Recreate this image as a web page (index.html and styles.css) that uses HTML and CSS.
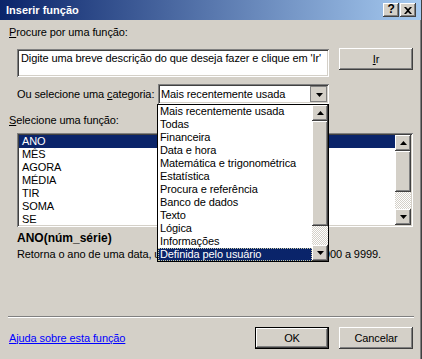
FILE: index.html
```html
<!DOCTYPE html>
<html lang="pt">
<head>
  <meta charset="UTF-8">
  <title>Inserir função</title>
  <link rel="stylesheet" href="styles.css">
</head>
<body>
<div class="window">
  <div class="titlebar">
    <span class="title">Inserir função</span>
    <div class="caption-buttons">
      <span class="cap-btn help">?</span>
      <span class="cap-btn close">
        <svg width="8" height="7" viewBox="0 0 8 7"><path d="M0 0h2l2 2 2-2h2L5 3.5 8 7H6L4 5 2 7H0l3-3.5z" fill="#000"/></svg>
      </span>
    </div>
  </div>

  <div class="content">
    <div class="label"><u>P</u>rocure por uma função:</div>
    <div class="search-row">
      <div class="search-box">Digite uma breve descrição do que deseja fazer e clique em 'Ir'</div>
      <span class="btn"><u>I</u>r</span>
    </div>

    <div class="category-row">
      <span class="label cat-label">Ou selecione uma <u>c</u>ategoria:</span>
      <div class="combo">
        <span class="combo-value">Mais recentemente usada</span>
        <span class="combo-arrow">
          <svg width="7" height="4" viewBox="0 0 7 4"><path d="M0 0h7L3.5 4z"/></svg>
        </span>
        <div class="combo-list">
          <div class="list-items">
            <div class="item">Mais recentemente usada</div>
            <div class="item">Todas</div>
            <div class="item">Financeira</div>
            <div class="item">Data e hora</div>
            <div class="item">Matemática e trigonométrica</div>
            <div class="item">Estatística</div>
            <div class="item">Procura e referência</div>
            <div class="item">Banco de dados</div>
            <div class="item">Texto</div>
            <div class="item">Lógica</div>
            <div class="item">Informações</div>
            <div class="item selected focused">Definida pelo usuário</div>
          </div>
          <div class="scrollbar">
            <span class="sb-btn"><svg width="7" height="4" viewBox="0 0 7 4"><path d="M3.5 0L7 4H0z"/></svg></span>
            <span class="sb-thumb long"></span>
            <span class="sb-track"></span>
            <span class="sb-btn"><svg width="7" height="4" viewBox="0 0 7 4"><path d="M0 0h7L3.5 4z"/></svg></span>
          </div>
        </div>
      </div>
    </div>

    <div class="label fn-label"><u>S</u>elecione uma função:</div>
    <div class="listbox">
      <div class="list-items">
        <div class="item selected">ANO</div>
        <div class="item">MÊS</div>
        <div class="item">AGORA</div>
        <div class="item">MÉDIA</div>
        <div class="item">TIR</div>
        <div class="item">SOMA</div>
        <div class="item">SE</div>
      </div>
      <div class="scrollbar">
        <span class="sb-btn"><svg width="7" height="4" viewBox="0 0 7 4"><path d="M3.5 0L7 4H0z"/></svg></span>
        <span class="sb-thumb short"></span>
        <span class="sb-track"></span>
        <span class="sb-btn"><svg width="7" height="4" viewBox="0 0 7 4"><path d="M0 0h7L3.5 4z"/></svg></span>
      </div>
    </div>

    <div class="signature">ANO(núm_série)</div>
    <div class="desc">Retorna o ano de uma data, um número inteiro no intervalo de 1900 a 9999.</div>

    <div class="separator"></div>

    <div class="footer">
      <a class="help-link" href="#">Ajuda sobre esta função</a>
      <div class="buttons">
        <span class="btn default">OK</span>
        <span class="btn">Cancelar</span>
      </div>
    </div>
  </div>
</div>
</body>
</html>
```

FILE: styles.css
```css
* {
  box-sizing: border-box;
}

body {
  margin: 0;
  padding: 0;
  width: 422px;
  height: 359px;
  overflow: hidden;
  font-family: "Liberation Sans", Arial, sans-serif;
  font-size: 11px;
  line-height: 13px;
  letter-spacing: -0.1px;
  color: #000;
  background-color: #d4d0c8;
}

.window {
  width: 422px;
  height: 359px;
  display: flex;
  flex-direction: column;
  border-right: 1px solid #404040;
  box-shadow: inset -1px 0 #808080;
}

/* title bar */
.titlebar {
  height: 20px;
  flex-shrink: 0;
  display: flex;
  align-items: center;
  justify-content: space-between;
  padding: 0 5px 0 6px;
  background: linear-gradient(90deg, #0a246a, #a6caf0);
}

.title {
  color: #fff;
  font-weight: bold;
  font-size: 11px;
  letter-spacing: 0;
}

.caption-buttons {
  display: flex;
  gap: 1px;
}

.cap-btn {
  width: 16px;
  height: 14px;
  display: flex;
  align-items: center;
  justify-content: center;
  background: #d4d0c8;
  box-shadow: inset -1px -1px #404040, inset 1px 1px #fff, inset -2px -2px #808080;
}

.cap-btn.help {
  font-weight: bold;
  font-size: 12px;
  padding-bottom: 1px;
}

/* content */
.content {
  flex: 1;
  display: flex;
  flex-direction: column;
  padding: 6px 8px 0 9px;
}

.label {
  white-space: nowrap;
}

.search-row {
  display: flex;
  align-items: flex-start;
  margin-top: 9px;
  gap: 10px;
}

.search-box {
  margin-top: 1px;
  margin-left: 8px;
  width: 312px;
  height: 28px;
  padding: 3px 4px;
  background: #fff;
  white-space: nowrap;
  overflow: hidden;
  box-shadow: inset 1px 1px #808080, inset -1px -1px #fff, inset 2px 2px #404040, inset -2px -2px #d4d0c8;
}

.btn {
  width: 74px;
  height: 22px;
  display: flex;
  align-items: center;
  justify-content: center;
  background: #d4d0c8;
  box-shadow: inset -1px -1px #404040, inset 1px 1px #fff, inset -2px -2px #808080;
}

.btn.default {
  box-shadow: inset 0 0 0 1px #000, inset -2px -2px #404040, inset 2px 2px #fff, inset -3px -3px #808080;
}

/* category */
.category-row {
  display: flex;
  align-items: center;
  margin-top: 7px;
  padding-left: 8px;
}

.cat-label {
  width: 141px;
}

.combo {
  position: relative;
  width: 171px;
  height: 20px;
  display: flex;
  align-items: center;
  justify-content: space-between;
  padding: 2px 2px 2px 3px;
  background: #fff;
  box-shadow: inset 1px 1px #808080, inset -1px -1px #fff, inset 2px 2px #404040, inset -2px -2px #d4d0c8;
}

.combo-arrow {
  width: 17px;
  height: 16px;
  display: flex;
  align-items: center;
  justify-content: center;
  background: #d4d0c8;
  border: 1px solid #808080;
  padding-top: 1px;
  padding-left: 1px;
}

.combo-list {
  position: absolute;
  top: 20px;
  left: -1px;
  width: 172px;
  height: 158px;
  display: flex;
  background: #fff;
  border: 1px solid #000;
  z-index: 5;
}

.list-items {
  flex: 1;
  overflow: hidden;
}

.item {
  height: 13px;
  padding-left: 2px;
  white-space: nowrap;
}

.item.selected {
  background: #0a246a;
  color: #fff;
}

.item.focused {
  outline: 1px dotted #c8c8a0;
  outline-offset: -1px;
}

.scrollbar {
  width: 16px;
  flex-shrink: 0;
  display: flex;
  flex-direction: column;
}

.sb-btn {
  height: 16px;
  flex-shrink: 0;
  display: flex;
  align-items: center;
  justify-content: center;
  background: #d4d0c8;
  box-shadow: inset -1px -1px #404040, inset 1px 1px #fff, inset -2px -2px #808080;
}

.sb-thumb {
  flex-shrink: 0;
  background: #d4d0c8;
  box-shadow: inset -1px -1px #404040, inset 1px 1px #fff, inset -2px -2px #808080;
}

.sb-thumb.long {
  height: 105px;
}

.sb-thumb.short {
  height: 41px;
}

.sb-track {
  flex: 1;
  background: repeating-conic-gradient(#d4d0c8 0 25%, #fff 0 50%) 0 0 / 2px 2px;
}

/* function list */
.fn-label {
  margin-top: 10px;
}

.listbox {
  margin-top: 6px;
  margin-left: 8px;
  width: 396px;
  height: 94px;
  display: flex;
  padding: 2px;
  background: #fff;
  box-shadow: inset 1px 1px #808080, inset -1px -1px #fff, inset 2px 2px #404040, inset -2px -2px #d4d0c8;
}

.listbox .item {
  padding-left: 3px;
}

.signature {
  margin-top: 5px;
  margin-left: 8px;
  font-weight: bold;
  font-size: 12px;
  letter-spacing: 0;
}

.desc {
  margin-top: 3px;
  margin-left: 8px;
  white-space: nowrap;
}

.separator {
  margin-top: 55px;
  margin-left: -1px;
  margin-right: -1px;
  height: 2px;
  border-top: 1px solid #808080;
  border-bottom: 1px solid #fff;
}

.footer {
  display: flex;
  align-items: center;
  justify-content: space-between;
  margin-top: 9px;
}

.help-link {
  color: #0000ff;
  text-decoration: underline;
}

.buttons {
  display: flex;
  gap: 10px;
}
```
